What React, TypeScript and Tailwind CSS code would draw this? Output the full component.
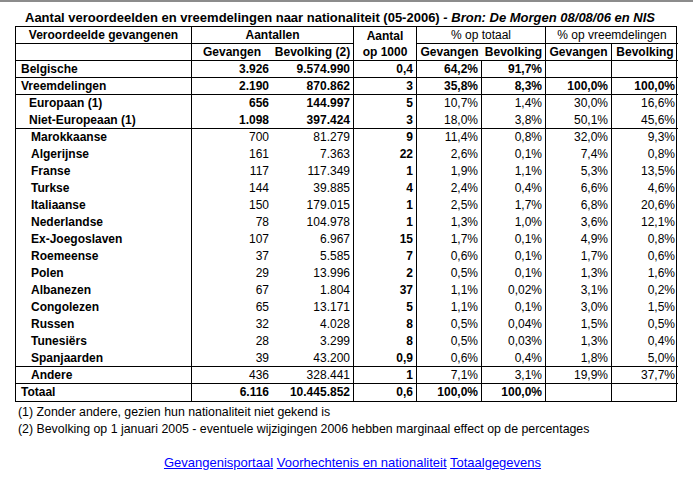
import React from 'react';

type Row = {
  label: string;
  level: 0 | 1 | 2;
  cells: string[];
  bold: boolean[];
  line: boolean;
};

const B = (n: number): boolean[] => Array.from({ length: 7 }, (_, i) => i < n);
const NAT = [false, false, true, false, false, false, false];
const ALL = B(7);

const rows: Row[] = [
  { label: 'Belgische', level: 0, cells: ['3.926', '9.574.990', '0,4', '64,2%', '91,7%', '', ''], bold: ALL, line: true },
  { label: 'Vreemdelingen', level: 0, cells: ['2.190', '870.862', '3', '35,8%', '8,3%', '100,0%', '100,0%'], bold: ALL, line: true },
  { label: 'Europaan (1)', level: 1, cells: ['656', '144.997', '5', '10,7%', '1,4%', '30,0%', '16,6%'], bold: B(3), line: false },
  { label: 'Niet-Europeaan (1)', level: 1, cells: ['1.098', '397.424', '3', '18,0%', '3,8%', '50,1%', '45,6%'], bold: B(3), line: true },
  { label: 'Marokkaanse', level: 2, cells: ['700', '81.279', '9', '11,4%', '0,8%', '32,0%', '9,3%'], bold: NAT, line: false },
  { label: 'Algerijnse', level: 2, cells: ['161', '7.363', '22', '2,6%', '0,1%', '7,4%', '0,8%'], bold: NAT, line: false },
  { label: 'Franse', level: 2, cells: ['117', '117.349', '1', '1,9%', '1,1%', '5,3%', '13,5%'], bold: NAT, line: false },
  { label: 'Turkse', level: 2, cells: ['144', '39.885', '4', '2,4%', '0,4%', '6,6%', '4,6%'], bold: NAT, line: false },
  { label: 'Italiaanse', level: 2, cells: ['150', '179.015', '1', '2,5%', '1,7%', '6,8%', '20,6%'], bold: NAT, line: false },
  { label: 'Nederlandse', level: 2, cells: ['78', '104.978', '1', '1,3%', '1,0%', '3,6%', '12,1%'], bold: NAT, line: false },
  { label: 'Ex-Joegoslaven', level: 2, cells: ['107', '6.967', '15', '1,7%', '0,1%', '4,9%', '0,8%'], bold: NAT, line: false },
  { label: 'Roemeense', level: 2, cells: ['37', '5.585', '7', '0,6%', '0,1%', '1,7%', '0,6%'], bold: NAT, line: false },
  { label: 'Polen', level: 2, cells: ['29', '13.996', '2', '0,5%', '0,1%', '1,3%', '1,6%'], bold: NAT, line: false },
  { label: 'Albanezen', level: 2, cells: ['67', '1.804', '37', '1,1%', '0,02%', '3,1%', '0,2%'], bold: NAT, line: false },
  { label: 'Congolezen', level: 2, cells: ['65', '13.171', '5', '1,1%', '0,1%', '3,0%', '1,5%'], bold: NAT, line: false },
  { label: 'Russen', level: 2, cells: ['32', '4.028', '8', '0,5%', '0,04%', '1,5%', '0,5%'], bold: NAT, line: false },
  { label: 'Tunesiërs', level: 2, cells: ['28', '3.299', '8', '0,5%', '0,03%', '1,3%', '0,4%'], bold: NAT, line: false },
  { label: 'Spanjaarden', level: 2, cells: ['39', '43.200', '0,9', '0,6%', '0,4%', '1,8%', '5,0%'], bold: NAT, line: true },
  { label: 'Andere', level: 2, cells: ['436', '328.441', '1', '7,1%', '3,1%', '19,9%', '37,7%'], bold: NAT, line: true },
  { label: 'Totaal', level: 0, cells: ['6.116', '10.445.852', '0,6', '100,0%', '100,0%', '', ''], bold: ALL, line: false },
];

// column index -> has a right rule in the body rows
const rightRule = [false, true, true, true, true, true, false];

function DataRow({ row }: { row: Row }) {
  const pad = row.level === 0 ? 'pl-[5px]' : row.level === 1 ? 'pl-[13px]' : 'pl-[15px]';
  const bottom = row.line ? 'border-b border-black' : '';
  return (
    <>
      <div className={`flex h-[17px] items-center border-r border-black font-bold ${pad} ${bottom}`}>
        {row.label}
      </div>
      {row.cells.map((c, i) => (
        <div
          key={i}
          className={`flex h-[17px] items-center justify-end pr-[3px] ${row.bold[i] ? 'font-bold' : ''} ${
            rightRule[i] ? 'border-r border-black' : ''
          } ${bottom}`}
        >
          {c}
        </div>
      ))}
    </>
  );
}

export default function App() {
  return (
    <div className="min-h-[478px] border-t-2 border-[#8c8c8c] bg-white text-black [font-family:'Liberation_Sans',Arial,sans-serif]">
      <div className="ml-[15px] w-[662px]">
        <div className="h-[24px] pl-[10px] pt-[8px] text-[13px] leading-[15px] font-bold">
          Aantal veroordeelden en vreemdelingen naar nationaliteit (05-2006){' '}
          <span className="italic">- Bron: De Morgen 08/08/06 en NIS</span>
        </div>

        <div className="grid grid-cols-[176px_80px_82px_63px_65px_64px_66px_66px] border border-black text-[12px] leading-[15px]">
          {/* header row 1 */}
          <div className="flex h-[17px] items-center justify-center border-r border-b border-black font-bold">
            Veroordeelde gevangenen
          </div>
          <div className="col-span-2 flex h-[17px] items-center justify-center border-r border-b border-black font-bold">
            Aantallen
          </div>
          <div className="row-span-2 flex flex-col items-center justify-center border-r border-b border-black font-bold leading-[16px]">
            <span>Aantal</span>
            <span>op 1000</span>
          </div>
          <div className="col-span-2 flex h-[17px] items-center justify-center border-r border-b border-black">
            % op totaal
          </div>
          <div className="col-span-2 flex h-[17px] items-center justify-center border-b border-black">
            % op vreemdelingen
          </div>

          {/* header row 2 */}
          <div className="h-[17px] border-r border-b border-black" />
          <div className="flex h-[17px] items-center justify-center border-b border-black font-bold">Gevangen</div>
          <div className="flex h-[17px] items-center justify-center border-r border-b border-black font-bold">
            Bevolking (2)
          </div>
          <div className="flex h-[17px] items-center justify-center border-b border-black font-bold">Gevangen</div>
          <div className="flex h-[17px] items-center justify-center border-r border-b border-black font-bold">
            Bevolking
          </div>
          <div className="flex h-[17px] items-center justify-center border-r border-b border-black font-bold">
            Gevangen
          </div>
          <div className="flex h-[17px] items-center justify-center border-b border-black font-bold">Bevolking</div>

          {rows.map((r) => (
            <DataRow key={r.label} row={r} />
          ))}
        </div>

        <div className="pl-[3px] pt-[2px] text-[12.35px] leading-[17px]">
          <p>(1) Zonder andere, gezien hun nationaliteit niet gekend is</p>
          <p>(2) Bevolking op 1 januari 2005 - eventuele wijzigingen 2006 hebben marginaal effect op de percentages</p>
        </div>
      </div>

      <div className="mt-[17px] pl-[12px] text-center text-[13px] leading-[16px]">
        <a href="#" className="text-[#0000ff] underline">Gevangenisportaal</a>{' '}
        <a href="#" className="text-[#0000ff] underline">Voorhechtenis en nationaliteit</a>{' '}
        <a href="#" className="text-[#0000ff] underline">Totaalgegevens</a>
      </div>
    </div>
  );
}
